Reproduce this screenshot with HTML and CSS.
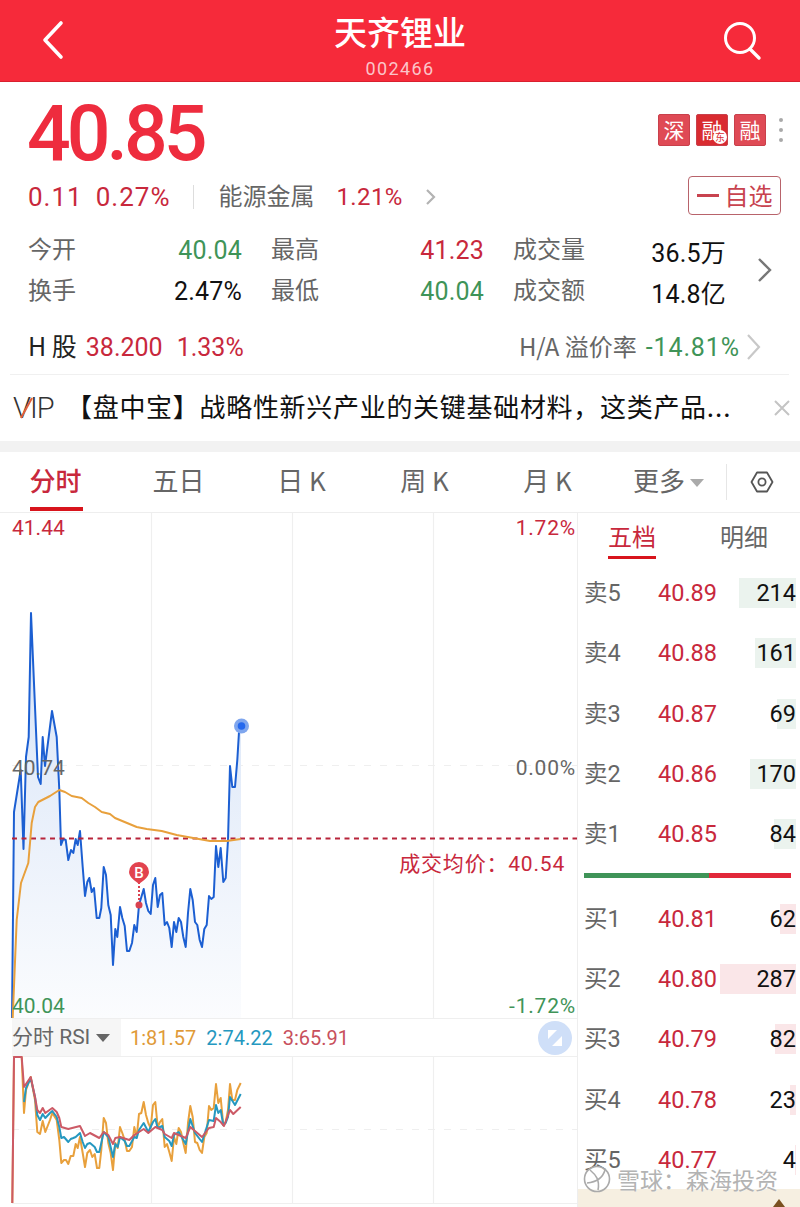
FILE: index.html
```html
<!DOCTYPE HTML>
<html>
	<head>
		<meta charset="utf-8">
		<title>天齐锂业</title>
		<link rel="stylesheet" href="styles.css">
	</head>
	<body>
		<header class="top">
			<svg class="top-back" width="30" height="44" viewBox="0 0 30 44"><path d="M19 4 L3 21 L19 38" fill="none" stroke="#fff" stroke-width="3.6" stroke-linecap="round" stroke-linejoin="round"/></svg>
			<div class="top-title">
				<h1>天齐锂业</h1>
				<p>002466</p>
			</div>
			<svg width="40" height="40" viewBox="0 0 40 40"><circle cx="17" cy="17" r="14.5" fill="none" stroke="#fff" stroke-width="3"/><path d="M27 28 L36 37" stroke="#fff" stroke-width="3.4" stroke-linecap="round"/></svg>
		</header>

		<section class="quote">
			<div class="quote-main">
				<div class="price">40.85</div>
				<div class="badges">
					<span class="badge">深</span>
					<span class="badge badge-dark">融<i>东</i></span>
					<span class="badge">融</span>
					<span class="dots"><b></b><b></b><b></b></span>
				</div>
			</div>
			<div class="change-row">
				<span class="up num">0.11</span>
				<span class="up num change-pct">0.27%</span>
				<span class="vbar"></span>
				<span class="sector">能源金属</span>
				<span class="up num sector-pct">1.21%</span>
				<svg class="sector-arrow" width="12" height="18" viewBox="0 0 12 18"><path d="M2 2 L9 9 L2 16" fill="none" stroke="#b3b3b3" stroke-width="2.2"/></svg>
				<span class="follow"><i></i>自选</span>
			</div>
			<div class="stats-wrap">
				<div class="stats">
					<div class="stat"><span>今开</span><b class="down">40.04</b></div>
					<div class="stat"><span>最高</span><b class="up">41.23</b></div>
					<div class="stat"><span>成交量</span><b>36.5万</b></div>
					<div class="stat"><span>换手</span><b>2.47%</b></div>
					<div class="stat"><span>最低</span><b class="down">40.04</b></div>
					<div class="stat"><span>成交额</span><b>14.8亿</b></div>
				</div>
				<svg class="stats-arrow" width="16" height="26" viewBox="0 0 16 26"><path d="M2 2 L13 13 L2 24" fill="none" stroke="#777" stroke-width="2.4"/></svg>
			</div>
			<div class="hshare">
				<span class="hshare-name">H 股</span>
				<span class="up">38.200</span>
				<span class="up hshare-pct">1.33%</span>
				<span class="premium">H/A 溢价率</span>
				<span class="down num premium-val">-14.81%</span>
				<svg width="16" height="28" viewBox="0 0 16 28"><path d="M2 2 L13 14 L2 26" fill="none" stroke="#c8c8c8" stroke-width="2.2"/></svg>
			</div>
		</section>

		<section class="news">
			<span class="vip">VIP<svg width="14" height="26" viewBox="0 0 14 26"><path d="M2 22 L13 2" stroke="#e2603c" stroke-width="2" fill="none"/></svg></span>
			<p>【盘中宝】战略性新兴产业的关键基础材料，这类产品<span class="more">...</span></p>
			<svg width="18" height="18" viewBox="0 0 18 18"><path d="M2 2 L16 16 M16 2 L2 16" stroke="#c4c4c4" stroke-width="2"/></svg>
		</section>

		<nav class="tabs">
			<a class="tab active">分时</a>
			<a class="tab">五日</a>
			<a class="tab">日 K</a>
			<a class="tab">周 K</a>
			<a class="tab">月 K</a>
			<a class="tab tab-more">更多<i class="caret"></i></a>
			<span class="tabs-line"></span>
			<svg width="24" height="24" viewBox="0 0 24 24"><path d="M7 2.5 H17 L22.5 12 L17 21.5 H7 L1.5 12 Z" fill="none" stroke="#555" stroke-width="1.8" stroke-linejoin="round"/><circle cx="12" cy="12" r="3.6" fill="none" stroke="#555" stroke-width="1.8"/></svg>
		</nav>

		<main class="market">
			<div class="chart">
				<svg class="chart-svg" width="577" height="694" viewBox="0 513 577 694">
					<defs>
						<linearGradient id="area" x1="0" y1="0" x2="0" y2="1">
							<stop offset="0" stop-color="#d6e3f7"/>
							<stop offset="1" stop-color="#fbfcfe"/>
						</linearGradient>
					</defs>
					<g stroke="#efefef" stroke-width="1.2">
						<path d="M151.5 513 V1018 M292.5 513 V1018 M433.5 513 V1018"/>
						<path d="M151.5 1056 V1203 M292.5 1056 V1203 M433.5 1056 V1203"/>
						<path d="M12 1018.5 H577 M12 1056.5 H577 M12 1203.5 H577"/>
						<path d="M12 765.5 H577 M12 1129.5 H577" stroke-dasharray="7 9"/>
					</g>
					<polygon fill="url(#area)" points="12,1018 14,812 20.7,770 23.5,849 26,757 28.7,737 31,613 38,777 40.7,784 42.7,737 45,766 52,711 56.7,737 59.3,790 61,845 63.3,839 65.7,840 68.3,860 71,850 73.3,853 75.7,839 77.7,845 80,831 82.7,867 85,896 87.3,882 89.3,878 91.7,892 94,888 96.7,918 99.3,918 101.3,908 103.7,867 106,875 108.3,905 110.7,915 113,965 115.3,929 117.3,937 120,907 122.3,918 124.7,926 127,951 129.3,951 132,943 134.3,925 136.7,932 139,905 143.7,889 146,903 148.3,911 150.7,914 153,885 155.3,878 157.7,907 160,895 162.3,893 164.7,925 167,922 169.3,928 171.7,947 174,922 176.3,932 178.7,918 181,922 183.3,937 185.7,947 188,913 190.3,889 192.7,900 195,922 197.3,925 199.7,940 202,947 204.3,929 206.7,925 209,896 211.3,899 213.7,897 216,846 218.3,867 220.7,848 223.3,882 225.7,878 228,840 230,766 232.3,787 235,787 237.3,760 239.3,727 241,727 241,1018"/>
					<polyline class="line" stroke="#1c5fd2" points="12,1018 14,812 20.7,770 23.5,849 26,757 28.7,737 31,613 38,777 40.7,784 42.7,737 45,766 52,711 56.7,737 59.3,790 61,845 63.3,839 65.7,840 68.3,860 71,850 73.3,853 75.7,839 77.7,845 80,831 82.7,867 85,896 87.3,882 89.3,878 91.7,892 94,888 96.7,918 99.3,918 101.3,908 103.7,867 106,875 108.3,905 110.7,915 113,965 115.3,929 117.3,937 120,907 122.3,918 124.7,926 127,951 129.3,951 132,943 134.3,925 136.7,932 139,905 143.7,889 146,903 148.3,911 150.7,914 153,885 155.3,878 157.7,907 160,895 162.3,893 164.7,925 167,922 169.3,928 171.7,947 174,922 176.3,932 178.7,918 181,922 183.3,937 185.7,947 188,913 190.3,889 192.7,900 195,922 197.3,925 199.7,940 202,947 204.3,929 206.7,925 209,896 211.3,899 213.7,897 216,846 218.3,867 220.7,848 223.3,882 225.7,878 228,840 230,766 232.3,787 235,787 237.3,760 239.3,727 241,727"/>
					<path d="M12 838.5 H577" stroke="#b8243a" stroke-width="2" stroke-dasharray="5 4.5"/>
					<polyline class="line" stroke="#e8a03c" points="12.7,1018 16.7,920 21,883 28.3,863 31.7,823 35,807 38.3,802 50,796 59.3,790 65,792 71.7,796 81.7,798 88.3,803 95,807 101.7,812 110,814 115,818 136.7,827 146.7,829 161.7,831 176.7,835 193.3,838 210,841 226.7,841 240.7,839"/>
					<circle cx="241.500" cy="726" r="7.500" fill="#7fa6ee"/>
					<circle cx="241.500" cy="726" r="3.800" fill="#2468ee"/>
					<path d="M139 882 V905" stroke="#d9414f" stroke-width="2" stroke-dasharray="2 2"/>
					<circle cx="139" cy="905" r="3.500" fill="#d9414f"/>
					<path d="M129 872 A10 10 0 1 1 149 872 C149 877 143 881 139 884 C135 881 129 877 129 872 Z" fill="#e2434f"/>
					<text class="marker" x="139" y="878" text-anchor="middle">B</text>

					<polyline class="rsi" stroke="#e8a03c" points="12.3,1203 14,1057 21.700,1057 24,1113 26,1090 30.700,1077 35,1100 37.300,1132 40,1134 42.700,1121 45.300,1132 50,1120 52.300,1113 56.700,1120 59.300,1140 61.300,1163 64,1160 66,1160 68.300,1164 70.700,1156 73.300,1156 75.700,1144 77.700,1148 80,1137 82.700,1153 85,1167 87.300,1153 90,1150 92.300,1157 94.700,1154 97,1168 99.300,1168 101.300,1150 103.700,1118 106,1123 108.300,1143 110.700,1153 113,1170 115.300,1143 117.700,1148 120,1127 122.300,1133 124.700,1140 127,1151 129.300,1151 132,1147 134.300,1127 136.700,1137 139,1114 141.300,1113 143.700,1102 146,1115 148.300,1123 150.700,1128 153,1105 155.300,1102 157.700,1127 160,1122 162.300,1119 164.700,1147 167,1144 169.300,1152 171.700,1161 174,1137 176.300,1144 178.700,1128 181,1132 183.300,1143 185.700,1153 188,1123 190.300,1106 192.700,1117 195,1142 197.300,1143 199.700,1150 202,1153 204.300,1137 206.700,1133 209,1106 211.300,1110 213.700,1108 216,1084 218.300,1103 220.700,1098 223.300,1125 225.700,1122 228,1110 230,1084 232.300,1100 235,1100 237.300,1090 240.700,1083"/>
					<polyline class="rsi" stroke="#2598c0" points="24,1102 26,1088 30.700,1078 35,1097 37.300,1115 40,1120 42.700,1114 45.300,1118 50,1113 52.300,1111 56.700,1117 59.300,1127 61.300,1138 64,1137 68.300,1142 70.700,1139 73.300,1138 75.700,1137 80,1133 82.700,1142 85,1148 87.300,1144 90,1143 94.700,1147 97,1152 99.300,1152 101.300,1143 103.700,1132 108.300,1137 113,1157 115.300,1144 117.700,1147 120,1137 124.700,1141 127,1146 129.300,1146 134.300,1137 136.700,1138 139,1130 143.700,1123 148.300,1132 153,1122 155.300,1119 157.700,1128 162.300,1126 164.700,1137 169.300,1141 171.700,1146 174,1135 178.700,1132 185.700,1144 190.300,1119 195,1133 202,1142 209,1120 213.700,1121 216,1105 218.300,1113 220.700,1110 223.300,1125 225.700,1123 228,1117 230,1097 235,1105 240.700,1094"/>
					<polyline class="rsi" stroke="#cc5a66" points="12.300,1203 14,1057 21.700,1057 24,1087 30.700,1077 35,1097 37.300,1110 40,1113 42.700,1108 45.300,1113 52.300,1108 56.700,1112 59.300,1118 61.300,1127 68.300,1129 80,1126 85,1136 90,1133 99.300,1138 103.700,1132 108.300,1135 113,1144 115.300,1138 120,1137 129.300,1140 134.300,1135 139,1132 143.700,1129 148.300,1133 155.300,1127 162.300,1130 164.700,1134 171.700,1138 174,1133 185.700,1138 190.300,1127 202,1137 209,1128 213.700,1127 216,1118 220.700,1122 224,1126 230,1110 233.300,1114 240.700,1107"/>
				</svg>

				<span class="label label-left label-top up">41.44</span>
				<span class="label label-right label-top up">1.72%</span>
				<span class="label label-left label-mid">40.74</span>
				<span class="label label-right label-mid">0.00%</span>
				<span class="label label-left label-low down">40.04</span>
				<span class="label label-right label-low down">-1.72%</span>
				<span class="label avg up">成交均价：40.54</span>

				<div class="rsi-head">
					<span class="rsi-name">分时 RSI<i class="caret"></i></span>
					<span class="rsi-val rsi-1">1:81.57</span>
					<span class="rsi-val rsi-2">2:74.22</span>
					<span class="rsi-val rsi-3">3:65.91</span>
					<svg class="rsi-toggle" width="34" height="34" viewBox="0 0 34 34"><circle cx="17" cy="17" r="17" fill="#cfdff8"/><path d="M10 9 H19 L10 18 Z M24 15 V25 H14 Z" fill="#fff"/></svg>
				</div>
			</div>

			<aside class="book">
				<div class="book-tabs">
					<a class="book-tab active">五档</a>
					<a class="book-tab">明细</a>
				</div>
				<div class="level"><span class="level-name">卖5</span><span class="level-price">40.89</span><span class="vol vol-sell" style="width:57px">214</span></div>
				<div class="level"><span class="level-name">卖4</span><span class="level-price">40.88</span><span class="vol vol-sell" style="width:41px">161</span></div>
				<div class="level"><span class="level-name">卖3</span><span class="level-price">40.87</span><span class="vol vol-sell" style="width:19px">69</span></div>
				<div class="level"><span class="level-name">卖2</span><span class="level-price">40.86</span><span class="vol vol-sell" style="width:46px">170</span></div>
				<div class="level"><span class="level-name">卖1</span><span class="level-price">40.85</span><span class="vol vol-sell" style="width:22px">84</span></div>
				<div class="ratio"><i class="ratio-sell"></i><i class="ratio-buy"></i></div>
				<div class="level"><span class="level-name">买1</span><span class="level-price">40.81</span><span class="vol vol-buy" style="width:16px">62</span></div>
				<div class="level"><span class="level-name">买2</span><span class="level-price">40.80</span><span class="vol vol-buy" style="width:76px">287</span></div>
				<div class="level"><span class="level-name">买3</span><span class="level-price">40.79</span><span class="vol vol-buy" style="width:21px">82</span></div>
				<div class="level"><span class="level-name">买4</span><span class="level-price">40.78</span><span class="vol vol-buy" style="width:6px">23</span></div>
				<div class="level"><span class="level-name">买5</span><span class="level-price">40.77</span><span class="vol vol-buy" style="width:1px">4</span></div>
				<div class="upgrade"><i></i></div>
			</aside>
		</main>

		<div class="watermark">
			<svg width="28" height="28" viewBox="0 0 28 28"><circle cx="14" cy="14" r="12.500" fill="rgba(255,255,255,.6)" stroke="#aaa" stroke-width="1.6"/><path d="M7 5 C13 10 17 15 15 25 M22 5 C20 12 14 17 4 18" fill="none" stroke="#aaa" stroke-width="1.6"/></svg>
			<span>雪球：森海投资</span>
		</div>
	</body>
</html>
```
FILE: styles.css
```css
* { margin: 0; padding: 0; box-sizing: border-box; }
html, body {
	height: 1207px;
	overflow: hidden;
}
body {
	background: #fff;
	color: #111;
	font-family: Roboto, 'Noto Sans CJK SC', sans-serif;
	position: relative;
}
i { font-style: normal; }
svg { display: block; flex: none; }

.up { color: #c8283c; }
.down { color: #3f9458; }
.num { letter-spacing: 1px; }

/* red title bar */
.top {
	align-items: center;
	background: #f62a3a;
	border-bottom: 1px solid #d9202f;
	display: flex;
	height: 82px;
	justify-content: space-between;
	padding: 0 37px 0 42px;
}
.top-back { margin-right: 5px; }
.top-title {
	align-self: flex-start;
	color: #fff;
	text-align: center;
}
.top-title h1 {
	font-family: 'Noto Sans CJK SC', sans-serif;
	font-size: 33px;
	font-weight: 500;
	line-height: 40px;
	margin-top: 11px;
}
.top-title p {
	color: #fbc4c9;
	font-size: 18px;
	letter-spacing: 1.4px;
	line-height: 22px;
	margin-top: 7px;
}

/* quote */
.quote { padding: 0 0 0 28px; }
.quote-main {
	display: flex;
	height: 95px;
	justify-content: space-between;
}
.price {
	color: #ee2c3e;
	font-size: 77px;
	font-weight: 500;
	letter-spacing: -4px;
	line-height: 80px;
	margin: 12px 0 0 -1px;
}
.badges {
	align-items: center;
	display: flex;
	gap: 6px;
	height: 32px;
	margin: 32px 16px 0 0;
}
.badge {
	background: #df4a55;
	border: 1px solid #c9404b;
	border-radius: 2px;
	color: #fff;
	font-family: 'Noto Sans CJK SC', sans-serif;
	font-size: 21px;
	height: 32px;
	line-height: 29px;
	position: relative;
	text-align: center;
	width: 32px;
}
.badge-dark { background: #d92b30; }
.badge-dark i {
	background: #fff;
	border-radius: 50%;
	bottom: 1px;
	color: #d92b30;
	font-size: 10px;
	height: 14px;
	line-height: 14px;
	position: absolute;
	right: 0;
	width: 14px;
}
.dots {
	display: flex;
	flex-direction: column;
	gap: 6px;
	margin-left: 7px;
	width: 5px;
}
.dots b {
	background: #a9a9a9;
	border-radius: 50%;
	display: block;
	height: 4px;
	width: 4px;
}

.change-row {
	align-items: center;
	display: flex;
	font-size: 26px;
	height: 40px;
}
.change-pct { margin-left: 13px; }
.vbar {
	background: #ddd;
	height: 24px;
	margin: 0 24px 0 23px;
	width: 1px;
}
.sector {
	color: #666;
	font-family: 'Noto Sans CJK SC', sans-serif;
	font-size: 24px;
	padding-bottom: 6px;
}
.sector-pct { font-size: 24px; letter-spacing: 0.4px; margin-left: 22px; }
.sector-arrow { margin-left: 22px; }
.follow {
	align-items: center;
	border: 1px solid #b8636b;
	border-radius: 4px;
	color: #c8434f;
	display: flex;
	font-family: 'Noto Sans CJK SC', sans-serif;
	font-size: 24px;
	height: 39px;
	justify-content: center;
	margin: -3px 19px 0 auto;
	padding-bottom: 3px;
	width: 93px;
}
.follow i {
	background: #c8434f;
	height: 3px;
	margin: 3px 6px 0 0;
	width: 22px;
}

.stats-wrap {
	align-items: center;
	display: flex;
	margin-top: 12px;
}
.stats {
	display: grid;
	gap: 0 29px;
	grid-template-columns: 214px 213px 213px;
	grid-auto-rows: 41px;
}
.stat {
	align-items: center;
	display: flex;
	justify-content: space-between;
}
.stat span {
	color: #666;
	font-family: 'Noto Sans CJK SC', sans-serif;
	font-size: 24px;
	padding-bottom: 4px;
}
.stat b {
	font-size: 25px;
	font-weight: 400;
	letter-spacing: 0.2px;
	padding-top: 2px;
}
.stats-arrow { margin-left: 31px; }

.hshare {
	align-items: center;
	border-bottom: 1px solid #f0f0f0;
	display: flex;
	font-size: 25px;
	height: 55px;
	margin: 9px 11px 0 -18px;
	padding-left: 18px;
}
.hshare-name {
	color: #222;
	font-family: 'Noto Sans CJK SC', sans-serif;
	font-size: 25px;
	margin-right: 9px;
	padding-bottom: 4px;
}
.hshare-pct { margin-left: 14px; }
.premium {
	color: #666;
	font-family: 'Noto Sans CJK SC', sans-serif;
	font-size: 24px;
	margin-left: auto;
	padding-bottom: 4px;
}
.premium-val { font-size: 25px; letter-spacing: 0.9px; margin: 0 6px 0 9px; }
.hshare svg { margin-right: 27px; }

/* news strip */
.news {
	align-items: center;
	display: flex;
	height: 66px;
	padding: 0 9px 0 13px;
}
.vip {
	color: #333;
	font-size: 29px;
	font-weight: 300;
	letter-spacing: -1px;
	position: relative;
	width: 54px;
}
.vip svg {
	left: 6px;
	position: absolute;
	top: 5px;
}
.news p {
	flex: 1;
	font-family: 'Noto Sans CJK SC', sans-serif;
	font-size: 26px;
	letter-spacing: 0.7px;
	margin-left: -1px;
	padding-bottom: 6px;
	white-space: nowrap;
}
.more { letter-spacing: 1px; }

/* period tabs */
.tabs {
	align-items: center;
	border-top: 11px solid #f2f2f2;
	display: flex;
	height: 71px;
}
.tab {
	color: #666;
	font-family: 'Noto Sans CJK SC', sans-serif;
	font-size: 26px;
	height: 60px;
	line-height: 56px;
	position: relative;
	text-align: center;
	width: 123px;
}
.tab:first-child { margin-left: -6px; }
.tab.active {
	color: #c8283c;
	font-weight: 500;
}
.tab.active::after {
	background: #d8141c;
	bottom: 1px;
	content: "";
	height: 4px;
	left: 36px;
	position: absolute;
	width: 53px;
}
.tab-more { margin-left: -2px; }
.caret {
	border-left: 7px solid transparent;
	border-right: 7px solid transparent;
	border-top: 8px solid #aaa;
	display: inline-block;
	margin-left: 5px;
	vertical-align: 4px;
}
.tabs-line {
	background: #e6e6e6;
	height: 36px;
	margin-left: -4px;
	width: 1px;
}
.tabs svg { margin-left: 23px; }

/* chart and order book */
.market {
	border-top: 1px solid #eee;
	display: flex;
	height: 695px;
}
.chart {
	flex: none;
	height: 694px;
	position: relative;
	width: 577px;
}
.chart-svg { position: absolute; left: 0; top: 0; }
.line { fill: none; stroke-width: 2; stroke-linejoin: round; }
.rsi { fill: none; stroke-width: 2; stroke-linejoin: round; }
.marker {
	fill: #fff;
	font-family: Roboto, sans-serif;
	font-size: 15px;
	font-weight: 500;
}
.label {
	color: #666;
	font-size: 21px;
	letter-spacing: 0.8px;
	line-height: 24px;
	position: absolute;
}
.label.up { color: #c8283c; }
.label.down { color: #3f9458; }
.label-left { left: 12px; letter-spacing: 0; }
.label-right { right: 1px; }
.label-top { top: 3px; }
.label-mid { top: 243px; }
.label-low { top: 481px; }
.avg {
	font-family: Roboto, 'Noto Sans CJK SC', sans-serif;
	right: 12px;
	top: 339px;
}
.rsi-head {
	align-items: center;
	display: flex;
	font-size: 20px;
	height: 37px;
	left: 12px;
	position: absolute;
	right: 5px;
	top: 506px;
}
.rsi-name {
	background: #f6f6f6;
	color: #666;
	font-family: Roboto, 'Noto Sans CJK SC', sans-serif;
	font-size: 21px;
	line-height: 37px;
	margin-right: 9px;
	padding-right: 5px;
	white-space: nowrap;
	width: 109px;
}
.rsi-name .caret { border-top-color: #666; margin-left: 6px; vertical-align: 2px; }
.rsi-val { margin-right: 10px; }
.rsi-1 { color: #e09a38; }
.rsi-2 { color: #2598c0; }
.rsi-3 { color: #c8505c; }
.rsi-toggle { margin-left: auto; }

.book {
	border-left: 1px solid #eee;
	flex: 1;
	padding: 0 4px 0 6px;
	position: relative;
}
.book-tabs {
	display: flex;
	height: 50px;
}
.book-tab {
	color: #666;
	font-family: 'Noto Sans CJK SC', sans-serif;
	font-size: 24px;
	height: 48px;
	line-height: 46px;
	margin-left: 64px;
	position: relative;
}
.book-tab:first-child { margin-left: 24px; }
.book-tab.active { color: #c8283c; }
.book-tab.active::after {
	background: #d8141c;
	bottom: 2px;
	content: "";
	height: 3px;
	left: 0;
	position: absolute;
	right: 0;
}
.level {
	align-items: center;
	display: flex;
	height: 60.3px;
	justify-content: space-between;
	position: relative;
}
.level-name {
	color: #666;
	font-family: Roboto, 'Noto Sans CJK SC', sans-serif;
	font-size: 23.5px;
	padding-bottom: 4px;
}
.level-price {
	color: #c8283c;
	font-size: 23.5px;
	left: 74px;
	position: absolute;
}
.vol {
	align-items: center;
	display: flex;
	font-size: 23.5px;
	height: 30px;
	justify-content: flex-end;
	white-space: nowrap;
}
.vol-sell { background: #ebf3ee; }
.vol-buy { background: #fae6e8; }
.ratio {
	display: flex;
	height: 5px;
	margin: 9px 5px 10px 0;
}
.ratio-sell { background: #3f9458; width: 125px; }
.ratio-buy { background: #e2283a; flex: 1; }
.upgrade {
	background: #f6efe1;
	bottom: 0;
	height: 18px;
	left: 0;
	overflow: hidden;
	position: absolute;
	right: 0;
}
.upgrade i {
	border-bottom: 8px solid #7a5020;
	border-left: 6px solid transparent;
	border-right: 6px solid transparent;
	bottom: 0;
	position: absolute;
	right: 15px;
}

/* site watermark over the corner */
.watermark {
	align-items: center;
	bottom: 11px;
	color: #b3b3b3;
	display: flex;
	font-family: 'Noto Sans CJK SC', sans-serif;
	font-size: 23px;
	gap: 6px;
	position: absolute;
	right: 22px;
	text-shadow: 0 0 1px #fff;
}
```
